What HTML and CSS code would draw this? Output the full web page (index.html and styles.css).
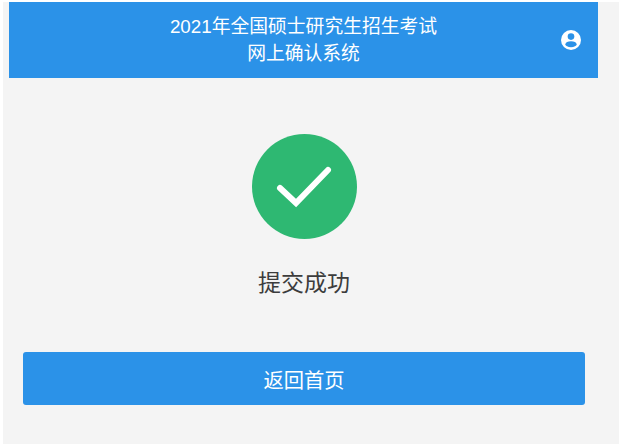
FILE: index.html
```html
<!DOCTYPE html>
<html lang="zh-CN">
<head>
<meta charset="utf-8">
<title>网上确认系统</title>
<link rel="stylesheet" href="styles.css">
</head>
<body>
<main class="page">
  <header class="topbar">
    <span class="spacer"></span>
    <h1 class="title">2021年全国硕士研究生招生考试<br>网上确认系统</h1>
    <span class="user">
      <svg class="user-icon" viewBox="0 0 20 20" width="20" height="20" aria-hidden="true">
        <circle cx="10" cy="10" r="10" fill="#fff"/>
        <circle cx="10" cy="6.6" r="3.3" fill="#2b92e8"/>
        <ellipse cx="10" cy="14.2" rx="5.6" ry="3" fill="#2b92e8"/>
      </svg>
    </span>
  </header>
  <section class="result">
    <svg class="check" viewBox="0 0 105 105" width="105" height="105" aria-hidden="true">
      <circle cx="52.5" cy="52.5" r="52.5" fill="#2eb872"/>
      <path d="M28 54 L44 69 L76 36" fill="none" stroke="#fff" stroke-width="6" stroke-linecap="round" stroke-linejoin="miter"/>
    </svg>
    <p class="message">提交成功</p>
  </section>
  <div class="actions">
    <button class="back" type="button">返回首页</button>
  </div>
</main>
</body>
</html>
```
FILE: styles.css
```css
html, body {
  margin: 0;
  padding: 0;
  background: #fff;
}
body {
  font-family: "Liberation Sans", "Noto Sans CJK SC", sans-serif;
}
.page {
  margin: 2px 0 1px 3px;
  height: 442px;
  background: #f4f4f4;
  padding: 0 21px 0 6px;
  box-sizing: border-box;
}
.topbar {
  display: grid;
  grid-template-columns: 1fr auto 1fr;
  align-items: center;
  height: 76px;
  background: #2b92e8;
  color: #fff;
}
.title {
  margin: 0;
  font-size: 18.8px;
  font-weight: 400;
  line-height: 27px;
  text-align: center;
  padding-top: 1px;
  padding-bottom: 2px;
}
.user {
  display: flex;
  justify-content: flex-end;
  padding-right: 17px;
}
.user-icon {
  display: block;
}
.result {
  display: flex;
  flex-direction: column;
  align-items: center;
  padding-top: 56px;
  padding-left: 1px;
}
.check {
  display: block;
}
.message {
  margin: 27px 0 0;
  font-size: 23px;
  line-height: 34px;
  color: #3c3c3c;
}
.actions {
  padding: 52px 13px 0 14px;
}
.back {
  display: block;
  width: 100%;
  height: 53px;
  border: 0;
  border-radius: 3px;
  background: #2b92e8;
  color: #fff;
  font-family: inherit;
  font-size: 20.3px;
}
```
